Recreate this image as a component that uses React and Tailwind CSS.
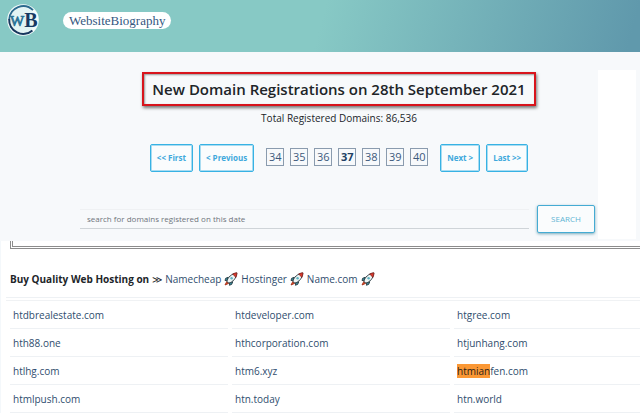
const pages = [34, 35, 36, 37, 38, 39, 40];
const hosts = ["Namecheap", "Hostinger", "Name.com"];
const rows = [
  ["htdbrealestate.com", "htdeveloper.com", "htgree.com"],
  ["hth88.one", "hthcorporation.com", "htjunhang.com"],
  ["htlhg.com", "htm6.xyz", "htmianfen.com"],
  ["htmlpush.com", "htn.today", "htn.world"],
];
const query = "htmian";

function Logo() {
  return (
    <svg className="size-8" viewBox="0 0 32 32" role="img" aria-label="WB">
      <circle cx="16" cy="16" r="15.8" fill="#f4fbfb" />
      <circle cx="16" cy="16" r="12.6" fill="#e3f4f4" />
      <path d="M26 6.2A14 14 0 0 0 2.2 15.5" fill="none" stroke="#2b6a8e" strokeWidth="1.8" />
      <path d="M2.2 15A14 14 0 0 0 25.4 26.4" fill="none" stroke="#17375e" strokeWidth="2" />
      <text x="3" y="21.5" fontSize="15" fontFamily="Liberation Serif, serif" fill="#2c7396" stroke="#2c7396" strokeWidth="0.7">W</text>
      <text x="17.2" y="22.5" fontSize="20" fontWeight="700" fontFamily="Liberation Serif, serif" fill="#173a63">B</text>
    </svg>
  );
}

function Rocket() {
  return (
    <svg className="size-3.5 shrink-0" viewBox="0 0 14 14" aria-hidden="true">
      <path d="M4.2 5.2 1.6 6.3 1 8.6l2.6-.4zM8.8 9.8 7.7 12.4l-2.3.9.3-2.9z" fill="#3c8f9d" stroke="#1d3038" strokeWidth=".8" />
      <path d="M2.8 9.6 1 13l3.6-1.6z" fill="#e8572b" stroke="#a02d19" strokeWidth=".9" />
      <path d="M2.9 9.2C4 5.3 7.2 1.8 12.8 1c-.5 5.4-4 9.2-8.1 10.1z" fill="#edf5f5" stroke="#1d3038" strokeWidth=".9" />
      <path d="M8.6 1.9C10.2 1.2 11.5.9 13 .8c0 1.5-.4 3.2-1.1 4.6z" fill="#d8392c" stroke="#7a231f" strokeWidth=".7" />
      <circle cx="7.6" cy="6.2" r="1.2" fill="#5eb2c0" />
    </svg>
  );
}

function PageButton({ children }) {
  return (
    <button className="h-7 rounded-xs border border-[#37b2e4] bg-[#fafcfd] px-1.5 text-[8px] font-bold text-[#3fa9dc] shadow-[inset_0_0_0_1px_#a9dcf1]">
      {children}
    </button>
  );
}

function Domain({ name }) {
  const hit = name.startsWith(query);
  return (
    <a href="#domain" className="text-[#2f4d6e]">
      {hit ? <mark className="bg-[#fb9835] text-[#2b2118]">{query}</mark> : null}
      {hit ? name.slice(query.length) : name}
    </a>
  );
}

export default function App() {
  return (
    <div className="overflow-hidden bg-white font-['Open_Sans',sans-serif] text-[10px] text-[#212529]">
      <header className="flex h-13 items-start gap-6 bg-[linear-gradient(105deg,#87c9c5_50%,#6099ac_98%)] px-[7px] pt-1">
        <a href="#home">
          <Logo />
        </a>
        <a
          href="#home"
          className="mt-2 flex h-[17px] items-center rounded-full bg-white px-1.5 font-['Liberation_Serif',serif] text-[13px] text-[#34577f]"
        >
          WebsiteBiography
        </a>
      </header>

      <section className="flex bg-[#f7f9fb] pr-1 pb-0.5">
        <div className="flex min-w-0 flex-1 flex-col items-center pt-5 pb-1.5">
          <div className="flex w-full flex-col items-center pl-20">
            <h1 className="flex h-[34px] items-center border-2 border-[#d8141c] px-2 text-[15px] font-semibold whitespace-nowrap text-[#202428] shadow-[1px_2px_3px_#777,inset_1px_1px_2px_#999]">
              New Domain Registrations on 28th September 2021
            </h1>
            <p className="mt-1 leading-4">Total Registered Domains: 86,536</p>
            <nav aria-label="Pages" className="mt-[18px] flex gap-1.5">
              <PageButton>&lt;&lt; First</PageButton>
              <PageButton>&lt; Previous</PageButton>
              <div className="flex gap-1.5 px-1.5 pt-1">
                {pages.map((n) => (
                  <a
                    key={n}
                    href="#page"
                    className={
                      n === 37
                        ? "flex size-[18px] items-center justify-center border border-[#8a9bae] text-[11px] font-bold text-[#213f63]"
                        : "flex size-[18px] items-center justify-center border border-[#8a9bae] text-[11px] text-[#3c597b]"
                    }
                  >
                    {n}
                  </a>
                ))}
              </div>
              <PageButton>Next &gt;</PageButton>
              <PageButton>Last &gt;&gt;</PageButton>
            </nav>
          </div>
          <form className="mt-[33px] flex w-full items-center gap-2 pr-[3px] pl-20">
            <input
              type="text"
              aria-label="search for domains registered on this date"
              placeholder="search for domains registered on this date"
              className="h-5 min-w-0 flex-1 border-t border-b border-t-[#eff1f3] border-b-[#cfd4d8] px-[7px] pb-0.5 text-[8px] placeholder:text-[#6f757b]"
            />
            <button
              type="button"
              className="h-7 w-[58px] rounded-xs border border-[#45abd3] bg-[#fafcfd] text-[8px] text-[#5fb4d4] shadow-[0_1px_3px_#7ab]"
            >
              SEARCH
            </button>
          </form>
        </div>
        <aside className="mt-[18px] w-[38px] bg-white" />
      </section>

      <main className="border-l border-[#f4f8fb] pl-[9px]">
        <div className="h-2 border-b-3 border-l-3 border-double border-[#8c8c8c]" />
        <p className="flex h-12 items-center gap-[3px] pt-3 leading-4 whitespace-nowrap">
          <strong>Buy Quality Web Hosting on</strong>
          <span>≫</span>
          {hosts.map((h) => (
            <a key={h} href="#host" className="flex items-center gap-[3px] text-[#2f4d6e]">
              {h}
              <Rocket />
            </a>
          ))}
        </p>
        <div className="-ml-1 border-t border-[#eef1f4] pt-0.5">
          <table className="w-[calc(100%+36px)] table-fixed border-separate border-spacing-x-1 border-spacing-y-0 border-t border-[#f0f2f4]">
            <tbody>
              {rows.map((r) => (
                <tr key={r[0]}>
                  {r.map((d) => (
                    <td key={d} className="h-7 border-b border-[#eef1f4] px-[3px] py-0 leading-4">
                      <Domain name={d} />
                    </td>
                  ))}
                </tr>
              ))}
            </tbody>
          </table>
        </div>
      </main>
    </div>
  );
}
